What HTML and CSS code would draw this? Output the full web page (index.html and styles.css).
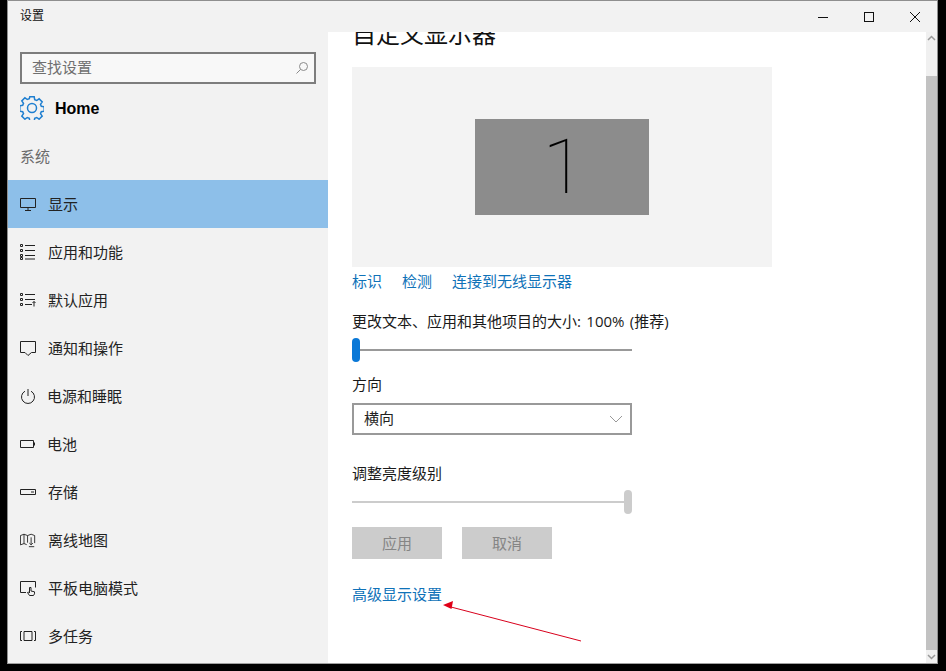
FILE: index.html
```html
<!DOCTYPE html>
<html lang="zh">
<head>
<meta charset="utf-8">
<title>设置</title>
<link rel="stylesheet" href="styles.css">
</head>
<body>
<div class="window">
  <header class="titlebar">
    <span class="title">设置</span>
    <div class="controls">
      <span class="ctl"><svg width="12" height="12" viewBox="0 0 12 12"><path d="M1 6.500h10" class="ln"/></svg></span>
      <span class="ctl"><svg width="12" height="12" viewBox="0 0 12 12"><rect x="1.500" y="1.500" width="9" height="9" class="ln"/></svg></span>
      <span class="ctl"><svg width="12" height="12" viewBox="0 0 12 12"><path d="M1 1l10 10M11 1L1 11" class="ln"/></svg></span>
    </div>
  </header>
  <div class="body">
    <aside class="sidebar">
      <div class="search">
        <span class="search-text">查找设置</span>
        <svg class="search-icon" width="14" height="14" viewBox="0 0 14 14"><circle cx="8.500" cy="5.500" r="4" class="ic-light"/><path d="M5.500 8.500L1.500 12.500" class="ic-light"/></svg>
      </div>
      <div class="home">
        <svg class="gear" width="24" height="24" viewBox="0 0 24 24"><path class="gear-path" d="M9.800 .8h4.400l.5 2.900 2 .8 2.400-1.700 3.100 3.100-1.700 2.400.8 2 2.900.5v4.400l-2.900.5-.8 2 1.700 2.400-3.100 3.100-2.400-1.700-2 .8-.5 2.900H9.800l-.5-2.900-2-.8-2.400 1.700-3.100-3.100 1.700-2.400-.8-2-2.900-.5V9.800l2.900-.5.8-2-1.700-2.400 3.100-3.100 2.400 1.700 2-.8z"/><circle cx="12" cy="12" r="4.500" class="gear-path"/></svg>
        <span class="home-text">Home</span>
      </div>
      <div class="group">系统</div>
      <nav class="nav">
        <a class="row active"><svg class="ic" viewBox="0 0 16 16"><path class="st" d="M.5 2.500h15v9H.5zM8 11.500v2.500M5 14.500h6"/></svg>显示</a>
        <a class="row"><svg class="ic" viewBox="0 0 16 16"><path class="st" d="M.5 .5h2v2h-2zM.5 5.500h2v2h-2zM.5 10.500h2v2h-2zM.5 13.500h2v2h-2zM5 1.500h10M5 6.500h10M5 11.500h10M5 15h10"/></svg>应用和功能</a>
        <a class="row"><svg class="ic" viewBox="0 0 16 16"><path class="st" d="M.5 1.500h2v2h-2zM.5 6.500h2v2h-2zM.5 11.500h2v2h-2zM5 2.500h10M5 7.500h10M5 12.500h7M14 14.500v-5M12.500 11l1.500-1.500 1.500 1.500"/></svg>默认应用</a>
        <a class="row"><svg class="ic" viewBox="0 0 16 16"><path class="st" d="M.5 1.500h15v11h-4l-3.500 3-3-3H.5z"/></svg>通知和操作</a>
        <a class="row row-tight"><svg class="ic" viewBox="0 0 16 16"><path class="st" d="M5 3.200a6.500 6.500 0 1 0 6 0M8 1v7"/></svg>电源和睡眠</a>
        <a class="row row-tight"><svg class="ic" viewBox="0 0 16 16"><path class="st" d="M.5 4.500h13v7H.5zM14.500 6.500v3"/></svg>电池</a>
        <a class="row"><svg class="ic" viewBox="0 0 16 16"><path class="st" d="M.5 5.500h15v5H.5zM11 8h3"/></svg>存储</a>
        <a class="row"><svg class="ic" viewBox="0 0 18 16"><path class="st" d="M.5 3l4-1.500 4 1.500 4-1.500 4 1.500v8.500M.5 3v10.500l4-1.500 3 1.200M4.500 1.500V12M8.500 3v8M12.500 5v8M10.500 11.500l2 2 2-2M10 15.500h6"/></svg>离线地图</a>
        <a class="row"><svg class="ic" viewBox="0 0 16 16"><path class="st" d="M6 12.500H.5v-11h15v6M9.500 15.500l-2-3 1-.5 1 1V7.500h1.500v3.500l3.500.8v2l-1 1.700z"/></svg>平板电脑模式</a>
        <a class="row"><svg class="ic" viewBox="0 0 16 16"><path class="st" d="M4 3.500h8v9H4zM2 3.500H.5v9H2M14 3.500h1.500v9H14"/></svg>多任务</a>
      </nav>
    </aside>
    <main class="main">
      <h1 class="heading">自定义显示器</h1>
      <div class="preview"><div class="monitor">1</div></div>
      <div class="links">
        <a class="link">标识</a>
        <a class="link">检测</a>
        <a class="link">连接到无线显示器</a>
      </div>
      <div class="label label-scale">更改文本、应用和其他项目的大小: 100% (推荐)</div>
      <div class="slider slider-blue"><span class="thumb"></span></div>
      <div class="label label-orient">方向</div>
      <div class="select">
        <span>横向</span>
        <svg width="14" height="8" viewBox="0 0 14 8"><path d="M1 1l6 6 6-6" class="chev"/></svg>
      </div>
      <div class="label label-bright">调整亮度级别</div>
      <div class="slider slider-grey"><span class="thumb"></span></div>
      <div class="buttons">
        <span class="btn">应用</span>
        <span class="btn">取消</span>
      </div>
      <a class="link link-adv">高级显示设置</a>
      <svg class="arrow" width="150" height="44" viewBox="0 0 150 44"><path d="M140 41L10 7" class="arrow-line"/><path d="M2 5l10-4-1.500 8z" class="arrow-head"/></svg>
    </main>
    <div class="scrollbar">
      <svg class="sb-arrow" width="9" height="6" viewBox="0 0 9 6"><path d="M1 5l3.500-3.500L8 5" class="sb-chev"/></svg>
      <div class="sb-thumb"></div>
      <svg class="sb-arrow" width="9" height="6" viewBox="0 0 9 6"><path d="M1 1l3.500 3.500L8 1" class="sb-chev"/></svg>
    </div>
  </div>
</div>
</body>
</html>
```
FILE: styles.css
```css
* { box-sizing: border-box; }
html, body { margin: 0; height: 100%; }
body {
  background: #000;
  overflow: hidden;
  font-family: "Open Sans", "Noto Sans CJK SC", "Liberation Sans", sans-serif;
  font-size: 15px;
  line-height: 20px;
  color: #1a1a1a;
}
.window {
  margin-left: 7px;
  width: 931px;
  height: 664px;
  border: 1px solid #8f8f8f;
  border-bottom-color: #a0a0a0;
  display: flex;
  flex-direction: column;
  background: #f2f2f2;
}
.titlebar {
  height: 31px;
  flex: none;
  display: flex;
  align-items: center;
  justify-content: space-between;
  padding-left: 12px;
}
.title { font-size: 12px; color: #111; line-height: 16px; align-self: flex-start; margin-top: 7px; }
.controls { display: flex; margin-right: -1px; }
.ctl { width: 46px; height: 30px; display: flex; align-items: center; justify-content: center; }
.ln { fill: none; stroke: #111; stroke-width: 1; }
.body { flex: 1; display: flex; min-height: 0; }

.sidebar { width: 320px; flex: none; overflow: hidden; background: #f2f2f2; }
.search {
  margin: 20px 12px 0;
  height: 32px;
  border: 2px solid #7d7d7d;
  background: #f8f8f8;
  display: flex;
  align-items: center;
  justify-content: space-between;
  padding: 0 5px 2px 10px;
}
.search-text { color: #6f6f6f; font-size: 15px; }
.search-icon { margin-top: 2px; }
.ic-light { fill: none; stroke: #8a8a8a; stroke-width: 1; }
.home { height: 48px; display: flex; align-items: center; padding-left: 12px; }
.gear { margin-right: 11px; flex: none; }
.gear-path { fill: none; stroke: #1f7fd0; stroke-width: 1.500; }
.home-text { font-family: "Liberation Sans", sans-serif; font-weight: 700; font-size: 16px; color: #000; margin-top: 1px; }
.group { margin: 14px 0 14px 12px; color: #6b6b6b; font-size: 15px; }
.nav { display: flex; flex-direction: column; }
.row { height: 48px; display: flex; align-items: center; padding-left: 12px; gap: 12px; color: #222; font-size: 15px; }
.row-tight { gap: 11px; }
.row.active { background: #8dbfe9; }
.ic { width: 16px; height: 16px; flex: none; }
.st { fill: none; stroke: #222; stroke-width: 1; }

.main { flex: 1; min-width: 0; background: #fff; padding-left: 24px; overflow: hidden; position: relative; }
.heading { font-size: 24px; font-weight: 400; line-height: 32px; margin: -14px 0 17px; color: #111; }
.preview { width: 420px; height: 200px; background: #f3f3f3; display: flex; align-items: center; justify-content: center; }
.monitor {
  width: 174px;
  height: 96px;
  background: #8c8c8c;
  color: #000;
  display: flex;
  align-items: center;
  justify-content: center;
  padding-left: 3px;
  font-family: "Roboto", sans-serif;
  font-weight: 100;
  font-size: 76px;
  line-height: 96px;
}
.links { display: flex; gap: 20px; margin-top: 4px; }
.link { color: #0f72b8; font-size: 15px; }
.label { color: #1a1a1a; font-size: 15px; }
.label-scale { margin-top: 20px; word-spacing: 1.500px; }
.label-orient { margin-top: 12px; }
.label-bright { margin-top: 28px; }
.slider { width: 280px; height: 24px; margin-top: 7px; display: flex; align-items: center; position: relative; }
.slider::before { content: ""; display: block; width: 100%; height: 2px; }
.thumb { position: absolute; top: 0; width: 8px; height: 24px; border-radius: 4px; }
.slider-blue::before { background: #999; }
.slider-blue .thumb { left: 0; background: #0a78d7; }
.slider-grey::before { background: #ccc; }
.slider-grey .thumb { right: 0; background: #ccc; }
.select {
  margin-top: 9px;
  width: 280px;
  height: 32px;
  border: 2px solid #999;
  display: flex;
  align-items: center;
  justify-content: space-between;
  padding: 0 7px 2px 10px;
  font-size: 15px;
  color: #222;
}
.select svg { margin-top: 2px; }
.chev { fill: none; stroke: #999; stroke-width: 1; }
.buttons { display: flex; gap: 20px; margin-top: 13px; }
.btn { width: 90px; height: 32px; background: #ccc; color: #858585; display: flex; align-items: center; justify-content: center; font-size: 15px; }
.link-adv { display: block; margin-top: 25px; }
.arrow { position: absolute; left: 113px; top: 568px; }
.arrow-line { fill: none; stroke: #d8001c; stroke-width: 1; }
.arrow-head { fill: #e00018; }

.scrollbar { width: 11px; flex: none; background: #f0f0f0; display: flex; flex-direction: column; align-items: center; }
.sb-arrow { flex: none; margin: 3px 0; }
.sb-arrow:first-child { margin-bottom: 35px; }
.sb-arrow:last-child { margin-top: 4px; }
.sb-thumb { flex: 1; width: 100%; background: #c2c2c2; }
.sb-chev { fill: none; stroke: #999; stroke-width: 1.500; }
```
